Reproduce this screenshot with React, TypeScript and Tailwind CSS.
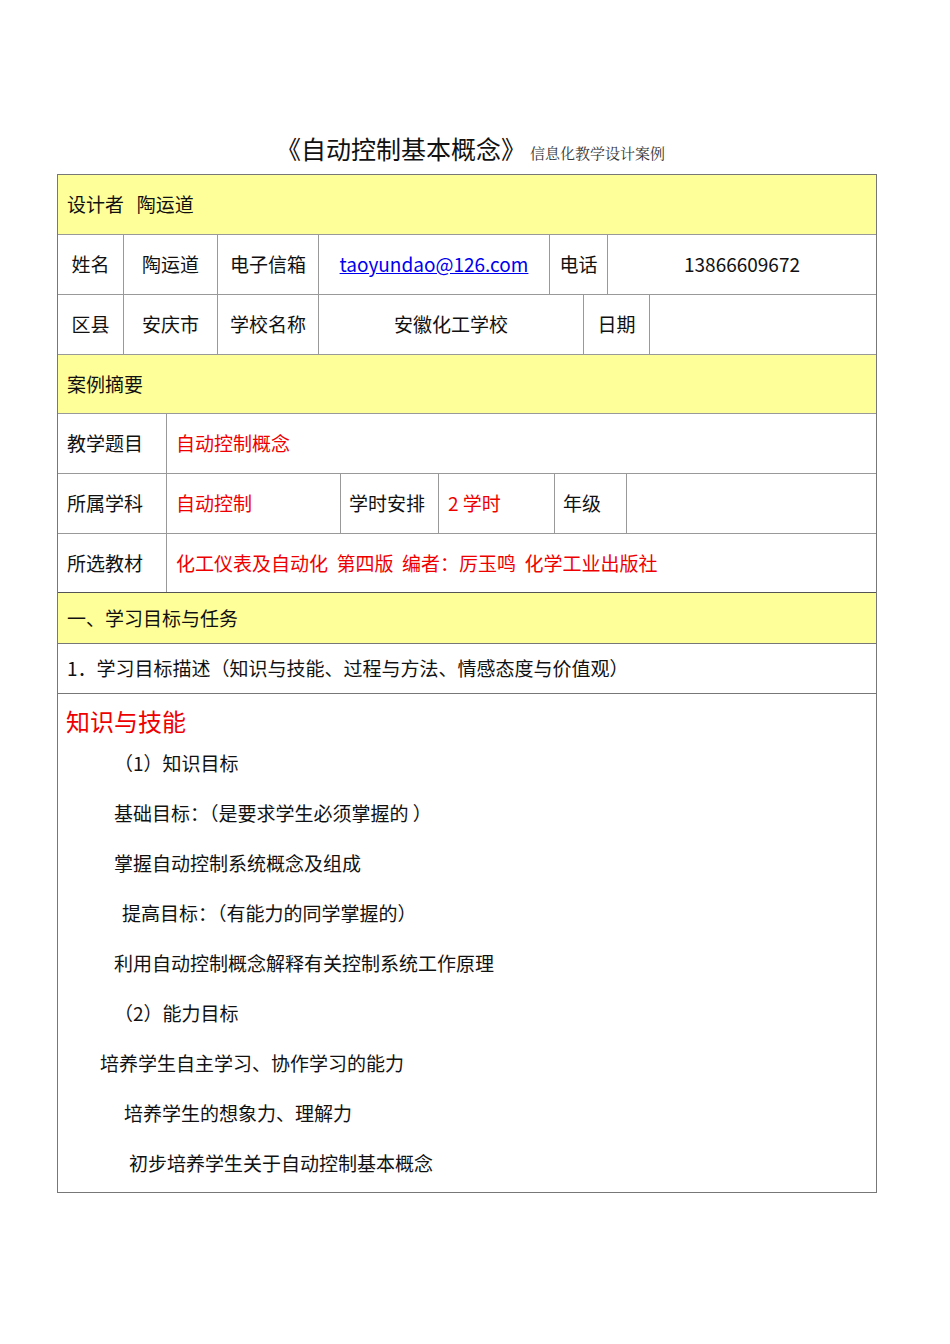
export default function App() {
  const f = { fontFamily: '"Noto Sans CJK SC", "Noto Sans", sans-serif' };
  const cell = "flex items-center border-r border-[#999] shrink-0";
  const row = "flex h-[60px] border-b border-[#999]";
  const lines: [number, string][] = [
    [56, "（1）知识目标"],
    [56, "基础目标：（是要求学生必须掌握的 ）"],
    [56, "掌握自动控制系统概念及组成"],
    [64, "提高目标：（有能力的同学掌握的）"],
    [56, "利用自动控制概念解释有关控制系统工作原理"],
    [56, "（2）能力目标"],
    [42, "培养学生自主学习、协作学习的能力"],
    [66, "培养学生的想象力、理解力"],
    [71, "初步培养学生关于自动控制基本概念"],
  ];
  return (
    <div className="w-[950px] h-[1344px] bg-white text-[19px] text-[#111]" style={f}>
      <div className="pt-[130px] pl-[276px] h-[174px] flex items-baseline">
        <span className="text-[25px]">《自动控制基本概念》</span>
        <span className="text-[15px] text-[#333] ml-1" style={{ fontFamily: '"Noto Serif CJK SC", "Noto Sans CJK SC", serif' }}>信息化教学设计案例</span>
      </div>
      <div className="ml-[57px] w-[820px] border border-[#777] border-b-[#777]">
        <div className="flex h-[60px] items-center bg-[#ffff99] border-b border-[#999] pl-[9px]">设计者&nbsp;&nbsp;&nbsp;陶运道</div>
        <div className={row}>
          <div className={`${cell} w-[66px] justify-center`}>姓名</div>
          <div className={`${cell} w-[94px] justify-center`}>陶运道</div>
          <div className={`${cell} w-[101px] justify-center`}>电子信箱</div>
          <div className={`${cell} w-[231px] justify-center text-[#0000ee] underline`}>taoyundao@126.com</div>
          <div className={`${cell} w-[58px] justify-center`}>电话</div>
          <div className="flex items-center flex-1 justify-center">13866609672</div>
        </div>
        <div className={row}>
          <div className={`${cell} w-[66px] justify-center`}>区县</div>
          <div className={`${cell} w-[94px] justify-center`}>安庆市</div>
          <div className={`${cell} w-[101px] justify-center`}>学校名称</div>
          <div className={`${cell} w-[265px] justify-center`}>安徽化工学校</div>
          <div className={`${cell} w-[66px] justify-center`}>日期</div>
          <div className="flex-1" />
        </div>
        <div className="flex h-[59px] items-center bg-[#ffff99] border-b border-[#999] pl-[9px]">案例摘要</div>
        <div className={row}>
          <div className={`${cell} w-[109px] pl-[9px]`}>教学题目</div>
          <div className="flex items-center pl-[9px] text-[#e00]">自动控制概念</div>
        </div>
        <div className={row}>
          <div className={`${cell} w-[109px] pl-[9px]`}>所属学科</div>
          <div className={`${cell} w-[174px] pl-[9px] text-[#e00]`}>自动控制</div>
          <div className={`${cell} w-[98px] pl-[8px]`}>学时安排</div>
          <div className={`${cell} w-[116px] pl-[9px] text-[#e00]`}>2 学时</div>
          <div className={`${cell} w-[72px] pl-[8px]`}>年级</div>
          <div className="flex-1" />
        </div>
        <div className="flex h-[59px] border-b border-[#555]">
          <div className={`${cell} w-[109px] pl-[9px]`}>所选教材</div>
          <div className="flex items-center pl-[9px] text-[#e00]">化工仪表及自动化&nbsp;&nbsp;第四版&nbsp;&nbsp;编者：厉玉鸣&nbsp;&nbsp;化学工业出版社</div>
        </div>
        <div className="flex h-[51px] items-center bg-[#ffff99] border-b border-[#777] pl-[9px]">一、学习目标与任务</div>
        <div className="flex h-[50px] items-center border-b border-[#777] pl-[9px]">1．学习目标描述（知识与技能、过程与方法、情感态度与价值观）</div>
        <div className="h-[498px] pt-[10px]">
          <div className="pl-[8px] text-[24px] text-[#e00] leading-[34px]">知识与技能</div>
          {lines.map(([x, t], i) => (
            <div key={i} className="h-[50px] flex items-center" style={{ paddingLeft: x }}>{t}</div>
          ))}
        </div>
      </div>
    </div>
  );
}
